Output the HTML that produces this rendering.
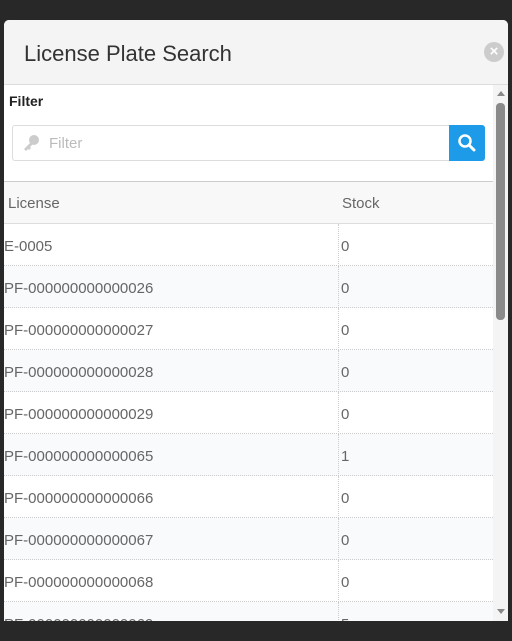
<!DOCTYPE html>
<html><head><style>
body{margin:0;width:512px;height:641px;background:#282828;overflow:hidden;font-family:"Liberation Sans",sans-serif;position:relative}
.m{position:absolute;left:4px;top:20px;width:504px;height:601px;background:#fff;border-radius:5px 5px 0 0;overflow:hidden}
.h{height:64px;background:#f4f4f4;border-bottom:1px solid #ddd;position:relative}
.h .t{position:absolute;left:20px;top:21px;font-size:22px;color:#333}
.x{position:absolute;left:480px;top:22px;width:20px;height:20px;border-radius:50%;background:#ccc;color:#fff;font-size:15px;font-weight:bold;text-align:center;line-height:20px}
.f{position:absolute;left:5px;top:73px;font-weight:bold;font-size:14px;color:#222}
.in{position:absolute;left:8px;top:105px;width:437px;height:34px;border:1px solid #ddd;border-radius:3px 0 0 3px}
.in span{position:absolute;left:36px;top:9px;color:#bbb;font-size:15px}
.btn{position:absolute;left:445px;top:105px;width:36px;height:36px;background:#1e9be8;border-radius:0 3px 3px 0}
.th{position:absolute;left:0;top:161px;width:489px;height:41px;background:#f8f8f8;border-top:1px solid #ccc;border-bottom:1px solid #ddd;color:#666;font-size:15px}
.r{position:absolute;left:0;width:489px;height:41px;border-bottom:1px dotted #ccc;color:#666;font-size:15px}
.r:nth-child(even){background:#f9fafc}
.c1{position:absolute;left:0;top:14px}.c2{position:absolute;left:334px;top:0;height:42px;border-left:1px dotted #ccc;padding-left:2px;line-height:46px}
.sb{position:absolute;left:489px;top:65px;width:15px;height:536px;background:#f4f4f4}
.th .c1{left:4px;top:13px}.th .c2{border:none;left:338px;padding:0;top:0;line-height:43px}
</style></head><body>
<div class="m">
<div class="h"><div class="t">License Plate Search</div><div class="x">×</div></div>
<div class="f">Filter</div>
<div class="in"><svg style="position:absolute;left:9px;top:9px" width="18" height="16" viewBox="0 0 18 16"><circle cx="12" cy="5" r="5" fill="#ccc"/><path d="M9 7 L2 14 L4 16 L6 14 L7 15 L9 13 L8 12 L11 9Z" fill="#ccc"/></svg><span>Filter</span></div>
<div class="btn"><svg width="36" height="36"><circle cx="16" cy="16" r="5.5" stroke="#fff" stroke-width="2.5" fill="none"/><path d="M20 20 L25 25" stroke="#fff" stroke-width="3" stroke-linecap="round"/></svg></div>
<div class="th"><span class="c1">License</span><span class="c2">Stock</span></div>
<div style="position:absolute;top:204px;left:0">
<div class="r" style="top:0"><span class="c1">E-0005</span><span class="c2">0</span></div>
<div class="r" style="top:42px"><span class="c1">PF-000000000000026</span><span class="c2">0</span></div>
<div class="r" style="top:84px"><span class="c1">PF-000000000000027</span><span class="c2">0</span></div>
<div class="r" style="top:126px"><span class="c1">PF-000000000000028</span><span class="c2">0</span></div>
<div class="r" style="top:168px"><span class="c1">PF-000000000000029</span><span class="c2">0</span></div>
<div class="r" style="top:210px"><span class="c1">PF-000000000000065</span><span class="c2">1</span></div>
<div class="r" style="top:252px"><span class="c1">PF-000000000000066</span><span class="c2">0</span></div>
<div class="r" style="top:294px"><span class="c1">PF-000000000000067</span><span class="c2">0</span></div>
<div class="r" style="top:336px"><span class="c1">PF-000000000000068</span><span class="c2">0</span></div>
<div class="r" style="top:378px"><span class="c1">PF-000000000000069</span><span class="c2">5</span></div>
</div>
<div class="sb"><div style="position:absolute;left:3px;top:18px;width:9px;height:217px;background:#8a8a8a;border-radius:4px"></div>
<div style="position:absolute;left:4px;top:6px;border:4px solid transparent;border-bottom:5px solid #888;border-top:0"></div>
<div style="position:absolute;left:4px;top:524px;border:4px solid transparent;border-top:5px solid #888;border-bottom:0"></div></div>
</div>
</body></html>
